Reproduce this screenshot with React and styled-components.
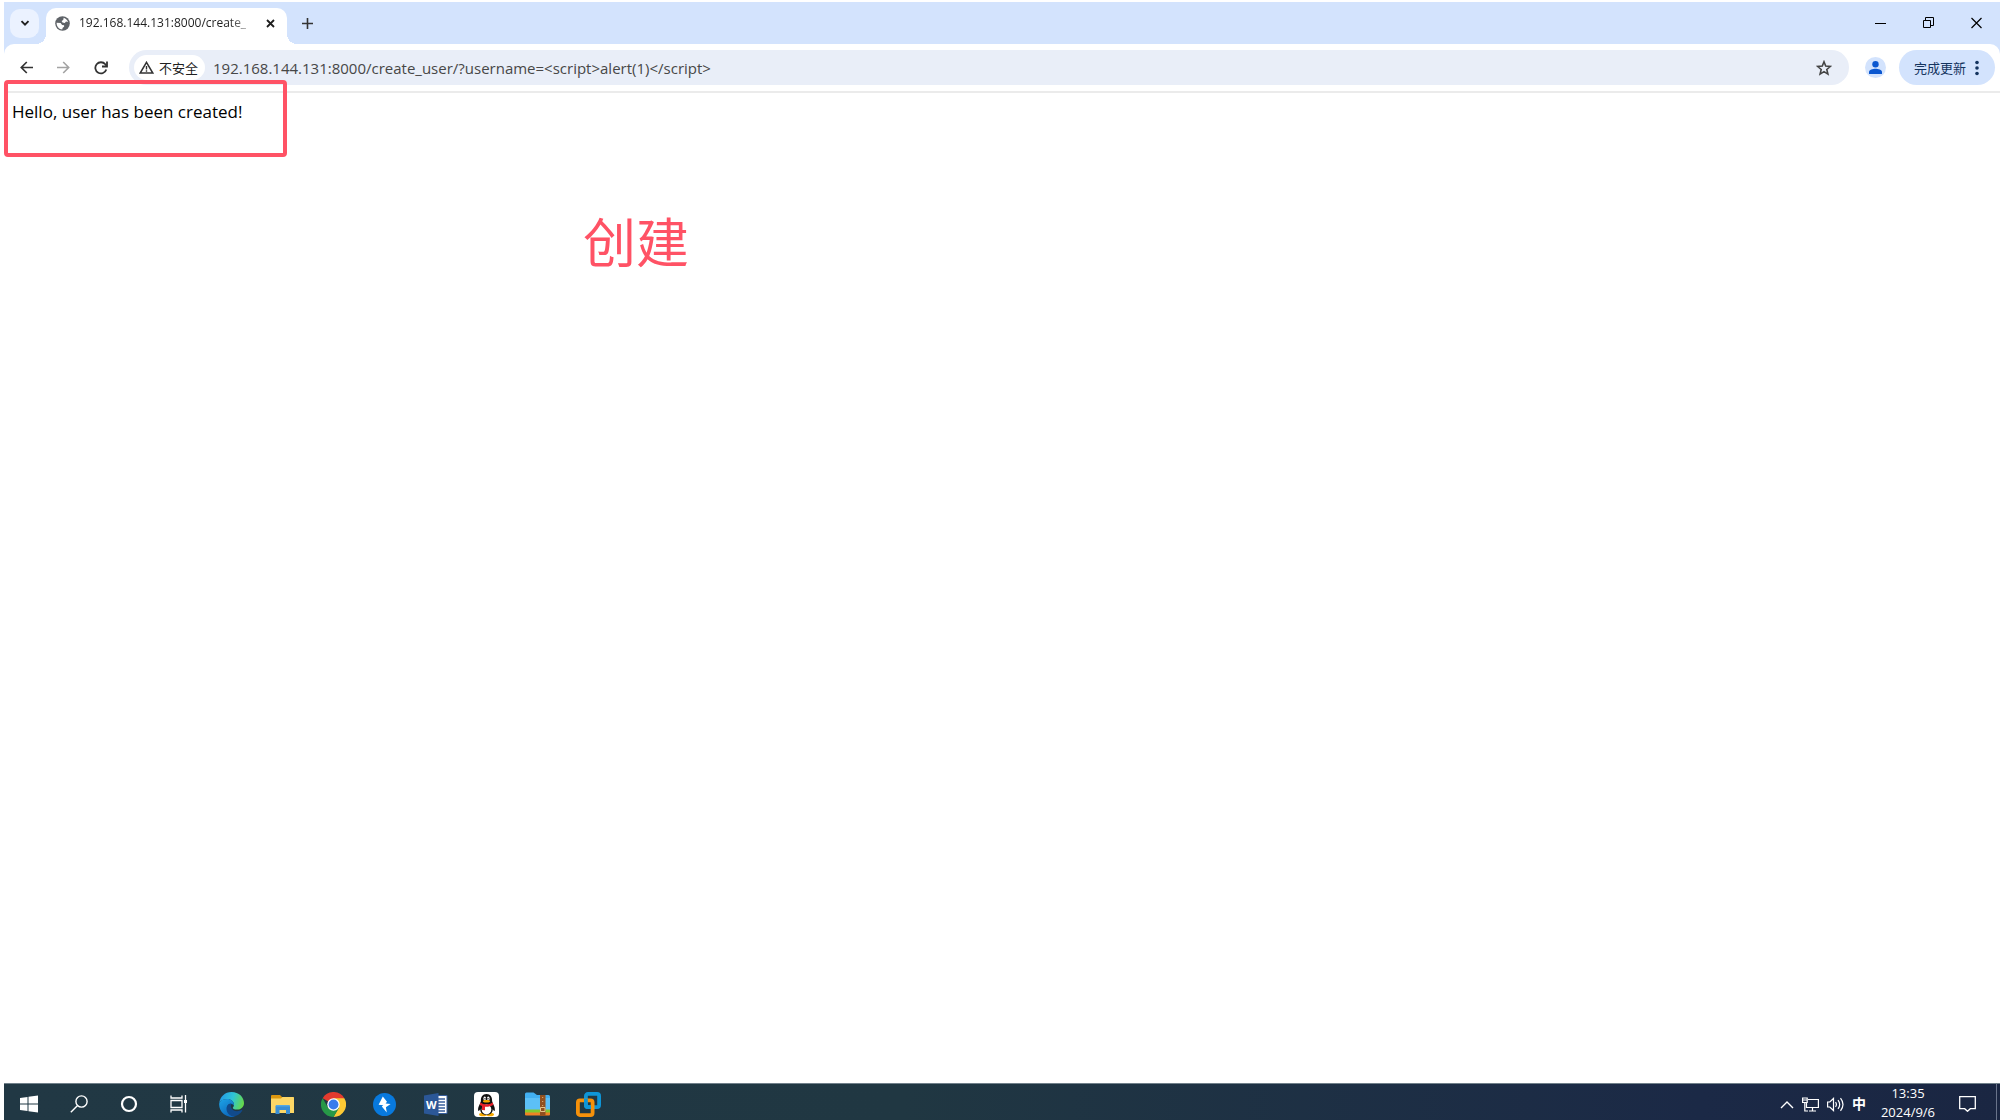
import React from "react";
import styled, { createGlobalStyle } from "styled-components";

const uiFont = '"Open Sans", "Noto Sans", "Noto Sans CJK SC", sans-serif';
const red = "#ff5265";
const frame = "#d3e3fd";

const GlobalStyle = createGlobalStyle`
  * { box-sizing: border-box; }
  body { margin: 0; background: #fff; font-family: ${uiFont}; color: #1f1f1f; }
  button, input { font: inherit; color: inherit; border: 0; padding: 0; margin: 0; background: none; }
`;

const Screen = styled.div`
  display: flex;
  flex-direction: column;
  height: 100vh;
  padding: 2px 0 0 4px;
  overflow: hidden;
`;

const TabStrip = styled.header`
  display: flex;
  align-items: center;
  height: 42px;
  padding-left: 6px;
  background: ${frame};
`;

const TabSearch = styled.button`
  display: grid;
  place-items: center;
  width: 29px;
  height: 29px;
  border-radius: 10px;
  background: #ebf2ff;
`;

const Tab = styled.div`
  display: flex;
  align-items: center;
  align-self: flex-end;
  position: relative;
  width: 241px;
  height: 36px;
  margin-left: 7px;
  padding: 0 10px 6px 9px;
  border-radius: 10px 10px 0 0;
  background: #fff;
  &::before,
  &::after {
    content: "";
    position: absolute;
    bottom: 0;
    width: 10px;
    height: 10px;
  }
  &::before {
    left: -10px;
    background: radial-gradient(circle at 0 0, ${frame} 10px, #fff 10px);
  }
  &::after {
    right: -10px;
    background: radial-gradient(circle at 100% 0, ${frame} 10px, #fff 10px);
  }
`;

const TabTitle = styled.span`
  flex: 1;
  margin-left: 9px;
  font-size: 12px;
  line-height: 18px;
  white-space: nowrap;
  mask-image: linear-gradient(to right, #000 150px, transparent 180px);
`;

const IconButton = styled.button`
  display: grid;
  place-items: center;
  width: ${(p) => p.$w || 37}px;
  height: ${(p) => p.$h || 35}px;
`;

const WindowControls = styled.div`
  display: flex;
  margin-left: auto;
`;

const ToolbarFrame = styled.div`
  background: ${frame};
`;

const Toolbar = styled.nav`
  display: flex;
  align-items: center;
  height: 49px;
  padding: 0 5px 0 4px;
  border-bottom: 2px solid #ebebeb;
  border-radius: 10px 10px 0 0;
  background: #fff;
`;

const AddressBar = styled.form`
  display: flex;
  align-items: center;
  flex: 1;
  height: 35px;
  margin-left: 10px;
  padding: 0 7px 0 5px;
  border-radius: 18px;
  background: #e9eef8;
`;

const SecurityChip = styled.button`
  display: flex;
  align-items: center;
  gap: 5px;
  width: 71px;
  height: 25px;
  padding-left: 5px;
  border-radius: 13px;
  background: #fff;
  font-size: 13px;
  line-height: 18px;
  white-space: nowrap;
`;

const UrlInput = styled.input`
  flex: 1;
  min-width: 0;
  height: 24px;
  margin-left: 8px;
  font-size: 15px;
  line-height: 24px;
  color: #474747;
  outline: none;
`;

const Profile = styled.button`
  display: grid;
  place-items: center;
  width: 21px;
  height: 21px;
  margin: 0 13px 0 16px;
  border-radius: 50%;
  background: ${frame};
`;

const UpdateButton = styled.button`
  display: flex;
  align-items: center;
  justify-content: space-between;
  width: 96px;
  height: 35px;
  padding: 0 16px 0 15px;
  border-radius: 18px;
  background: ${frame};
  font-size: 13px;
  color: #14345f;
`;

const Page = styled.main`
  position: relative;
  flex: 1;
  padding: 7px 8px;
`;

const Message = styled.p`
  margin: 0;
  font-size: 17px;
  line-height: 24px;
  color: #000;
`;

const HighlightBox = styled.div`
  position: absolute;
  top: -13px;
  left: 0;
  width: 283px;
  height: 77px;
  border: 4px solid ${red};
  border-radius: 4px;
`;

const Annotation = styled.div`
  position: absolute;
  top: 118px;
  left: 579px;
  font-size: 53px;
  line-height: 64px;
  color: ${red};
`;

const Taskbar = styled.footer`
  display: flex;
  flex: none;
  align-items: center;
  height: 37px;
  padding-top: 4px;
  border-top: 1px solid #70808a;
  background: linear-gradient(to right, #213844, #203742 45%, #1b2946 85%, #1a2642);
  color: #fff;
`;

const Apps = styled.div`
  display: flex;
  margin-left: 2px;
`;

const Tray = styled.div`
  display: flex;
  align-items: center;
  gap: 8px;
  margin-left: auto;
`;

const InputMode = styled.button`
  font-size: 14px;
  line-height: 20px;
  font-weight: 700;
`;

const Clock = styled.time`
  display: block;
  align-self: flex-start;
  width: 68px;
  height: 32px;
  margin-top: -4px;
  font-size: 13px;
  line-height: 19px;
  text-align: center;
`;

const Notifications = styled.button`
  display: grid;
  place-items: center;
  width: 34px;
  height: 32px;
`;

const ShowDesktop = styled.button`
  width: 4px;
  height: 36px;
  margin: -4px 0 0 4px;
  border-left: 1px solid #69738a;
`;

const Svg = ({ w = 20, h = w, box, children, ...rest }) => (
  <svg width={w} height={h} viewBox={box || `0 0 ${w} ${h}`} fill="none" aria-hidden="true" {...rest}>
    {children}
  </svg>
);

const WindowsIcon = () => (
  <Svg w={18}>
    <path d="M0 3 7.5 1.9V8.5H0zM8.5 1.7 18 .4V8.5H8.5zM0 9.5h7.5v6.6L0 15zM8.5 9.5H18v8.1L8.5 16.3z" fill="#fff" />
  </Svg>
);

const SearchIcon = () => (
  <Svg w={18} stroke="#fff" strokeWidth="1.4">
    <circle cx="11.5" cy="6.5" r="5.6" />
    <path d="M7.6 10.5.8 17.2" />
  </Svg>
);

const CortanaIcon = () => (
  <Svg w={18} stroke="#fff" strokeWidth="2.2">
    <circle cx="9" cy="9" r="7" />
  </Svg>
);

const TaskViewIcon = () => (
  <Svg w={18} stroke="#fff" strokeWidth="1.3">
    <path d="M1 .5V3h11V.5M1 17.5V15h11v2.5M1 5.5h11v7H1zM15.5 0v5M15.5 8v9.5" />
    <path d="M14 5h3v3h-3z" fill="#fff" stroke="none" />
  </Svg>
);

const EdgeIcon = () => (
  <Svg w={25}>
    <defs>
      <linearGradient id="edgeTop" x1="2" y1="5" x2="24" y2="12" gradientUnits="userSpaceOnUse">
        <stop stopColor="#249de4" />
        <stop offset=".5" stopColor="#2fc5d6" />
        <stop offset="1" stopColor="#66d84a" />
      </linearGradient>
      <linearGradient id="edgeSide" x1="3" y1="8" x2="14" y2="24" gradientUnits="userSpaceOnUse">
        <stop stopColor="#1b9de2" />
        <stop offset="1" stopColor="#0b62b8" />
      </linearGradient>
    </defs>
    <path d="M.2 11.5C1 4.5 6 0 12.5 0 20 0 25 5.3 25 11c0 4-3 6.6-6.8 6.6-3.2 0-4.7-1-4.4-1.8.3-.6 1.200-1.3 1.200-3.3 0-3-3-5.5-6.700-5.500-4 0-7.100 1.700-8.100 4.500z" fill="url(#edgeTop)" />
    <path d="M.2 11.500C1.200 8.400 4.300 7 8.300 7c3.700 0 6.700 2.500 6.700 5.500 0 .4 0 .8-.1 1.100C13.800 12 12 11.200 10.300 12c-3 1.400-3.200 6.800.4 10 2 1.800 4.500 2.400 6 2.300A12.500 12.500 0 0 1 .2 11.500z" fill="url(#edgeSide)" />
    <path d="M10.300 12C6 14 7 20.500 10.700 23c4 2.600 9.600.8 12.500-4.300.2-.4-.1-.8-.5-.6-5 2.300-9.400.7-10.600-2.600-.6-1.700 0-3 .6-3.800-.8-.1-1.600 0-2.400.3z" fill="#114a8b" />
  </Svg>
);

const FolderIcon = () => (
  <Svg w={23} h={19}>
    <path d="M0 1q0-1 1-1h8l2 2H22q1 0 1 1v4H0z" fill="#dc970f" />
    <path d="M0 3.5h10l1.5-1.5H22q1 0 1 1v15H0z" fill="#fcd766" />
    <path d="M4.5 11.5q0-1.5 1.5-1.5h11.5q1.5 0 1.5 1.5V19h-4v-4H8.5v4h-4z" fill="#398ed5" />
    <path d="M4.5 11.5q0-1.5 1.5-1.5h11.5q1.5 0 1.5 1.5z" fill="#53a8e4" />
  </Svg>
);

const ChromeIcon = () => (
  <Svg w={25} box="0 0 48 48">
    <path d="M24 24 3.2 12A24 24 0 0 1 44.8 12z" fill="#e33b2e" />
    <path d="M24 12h20.8A24 24 0 0 1 24 48l10.4-18z" fill="#fcc934" />
    <path d="M13.6 30 3.2 12A24 24 0 0 0 24 48l10.4-18z" fill="#279847" />
    <circle cx="24" cy="24" r="12" fill="#fff" />
    <circle cx="24" cy="24" r="9.5" fill="#397ced" />
  </Svg>
);

const BoltIcon = () => (
  <Svg w={23}>
    <circle cx="11.5" cy="11.5" r="11.5" fill="#0879dd" />
    <path d="M9.8 3.600 5.600 11.800 10.300 12.200 8.800 13.600 13.800 19.400 12.900 14.200 17.600 11.100 12.600 10.500 14 8.800z" fill="#fff" />
  </Svg>
);

const WordIcon = () => (
  <Svg w={24} h={23}>
    <path d="M12 2.5h11v18H12z" fill="#fff" stroke="#385f9d" />
    <path d="M14 6h7M14 9h7M14 12h7M14 15h7M14 18h7" stroke="#385f9d" strokeWidth="1.3" />
    <path d="M0 2.5 14.5 0v23L0 20.5z" fill="#2b5797" />
    <text x="7.2" y="15.5" fill="#fff" fontFamily="Open Sans, sans-serif" fontSize="11" fontWeight="700" textAnchor="middle">W</text>
  </Svg>
);

const PenguinIcon = () => (
  <Svg w={25}>
    <rect width="25" height="25" rx="4" fill="#fff" />
    <ellipse cx="9" cy="22.5" rx="4" ry="1.8" fill="#f7a900" />
    <ellipse cx="16" cy="22.5" rx="4" ry="1.8" fill="#f7a900" />
    <path d="M12.5 2C8.5 2 6.8 5 6.9 8.7 6.8 11 3.5 15 4.2 18.5c.4 1.2 1.6-.5 2-1.2 0 3.7 3 5.7 6.300 5.700s6.300-2 6.300-5.700c.4.700 1.600 2.400 2 1.200.7-3.500-2.600-7.500-2.700-9.800C18.200 5 16.500 2 12.500 2z" fill="#111" />
    <ellipse cx="12.5" cy="17.5" rx="4.8" ry="4.9" fill="#fff" />
    <ellipse cx="10.7" cy="6.5" rx="1.3" ry="1.9" fill="#fff" />
    <ellipse cx="14.3" cy="6.5" rx="1.3" ry="1.9" fill="#fff" />
    <circle cx="11" cy="6.7" r=".7" fill="#111" />
    <circle cx="14" cy="6.7" r=".7" fill="#111" />
    <ellipse cx="12.5" cy="9.3" rx="3.6" ry="1.2" fill="#f7a900" />
    <path d="M6.3 10.5c3.500 2.500 9 2.500 12.400 0l.7 2.300c-2.400 1.600-5.500 2.200-8.400 2v3.500l-3-.3v-3.900l-2.200-1z" fill="#e6202a" />
  </Svg>
);

const ArchiveIcon = () => (
  <Svg w={25} h={24}>
    <path d="M0 2q0-1.500 1.500-1.500h7L12 3h11.5Q25 3 25 4.5V18H0z" fill="#42b0f2" />
    <path d="M0 6h25v12H0z" fill="#5cc0f7" />
    <path d="M0 17.5h25V21H0z" fill="#82c930" />
    <path d="M0 20.5h25v2q0 1-1 1H1q-1 0-1-1z" fill="#ef8324" />
    <path d="M15 3h5.500v21H15z" fill="#91501f" />
    <path d="M17.700 5v9" stroke="#e5b97b" strokeDasharray="1 3" />
    <path d="M15.500 15.500h4.500v4h-4.500z" stroke="#e5c48a" />
  </Svg>
);

const VmwareIcon = () => (
  <Svg w={25} strokeWidth="3.8">
    <rect x="9.9" y="1.9" width="13.2" height="13.2" rx="2" stroke="#0e96d8" />
    <rect x="1.9" y="8.4" width="14.7" height="14.7" rx="2" stroke="#f6910a" />
    <path d="M9.9 6.500v6.600q0 2 2 2H15" stroke="#0e96d8" />
  </Svg>
);

const systemApps = [
  ["开始", WindowsIcon],
  ["搜索", SearchIcon],
  ["Cortana", CortanaIcon],
  ["任务视图", TaskViewIcon],
];

const pinnedApps = [
  ["Edge", EdgeIcon],
  ["文件资源管理器", FolderIcon],
  ["Chrome", ChromeIcon],
  ["闪电", BoltIcon],
  ["Word", WordIcon],
  ["QQ", PenguinIcon],
  ["压缩", ArchiveIcon],
  ["VMware", VmwareIcon],
];

function BrowserTabs() {
  return (
    <TabStrip>
      <TabSearch aria-label="搜索标签页">
        <Svg w={10} stroke="#1f1f1f" strokeWidth="1.9"><path d="m1.5 3.2 3.5 3.5 3.5-3.5" /></Svg>
      </TabSearch>
      <Tab>
        <Svg w={15}>
          <circle cx="7.5" cy="7.5" r="7.3" fill="#5f6368" />
          <path d="M8.7 1.7c1 .3 3.500 1.600 4.400 4.300L11 5.500 9.800 7 7.500 6.600l-.9-1.700 1.600-.8zM1.600 6.700l4 .3 1.500 2 2 .3v1.500l-1.400 1-.5 1.700C4 13.300 1.600 10.500 1.600 6.700z" fill="#fff" />
        </Svg>
        <TabTitle>192.168.144.131:8000/create_</TabTitle>
        <IconButton $w={14} $h={18} aria-label="关闭标签页">
          <Svg w={9} stroke="#1f1f1f" strokeWidth="1.8"><path d="m1 1 7 7M8 1 1 8" /></Svg>
        </IconButton>
      </Tab>
      <IconButton $w={40} aria-label="新标签页">
        <Svg w={11} stroke="#333" strokeWidth="1.6"><path d="M5.5 0v11M0 5.5h11" /></Svg>
      </IconButton>
      <WindowControls>
        <IconButton $w={48} aria-label="最小化">
          <Svg w={12} stroke="#000"><path d="M1 6.5h11" /></Svg>
        </IconButton>
        <IconButton $w={48} aria-label="还原">
          <Svg w={12} stroke="#000"><path d="M1.5 3.5h7v7h-7zM3.500 3V.5h8v8H9" /></Svg>
        </IconButton>
        <IconButton $w={48} aria-label="关闭">
          <Svg w={12} stroke="#000" strokeWidth="1.2"><path d="m1.500 1 10 10M11.500 1l-10 10" /></Svg>
        </IconButton>
      </WindowControls>
    </TabStrip>
  );
}

function BrowserToolbar() {
  return (
    <ToolbarFrame>
      <Toolbar>
        <IconButton aria-label="后退">
          <Svg w={13} stroke="#333" strokeWidth="1.7"><path d="M13 6.5H1.5M6.8 1 1.3 6.5 6.8 12" /></Svg>
        </IconButton>
        <IconButton aria-label="前进">
          <Svg w={13} stroke="#a3a3a3" strokeWidth="1.6"><path d="M0 6.5h11.5M6.2 1l5.500 5.500L6.200 12" /></Svg>
        </IconButton>
        <IconButton aria-label="重新加载">
          <Svg w={14} stroke="#333" strokeWidth="1.8">
            <path d="M12.3 8.5a5.600 5.600 0 1 1-1-5.200l1.200 1.500" />
            <path d="M13 .5v5H8" />
          </Svg>
        </IconButton>
        <AddressBar onSubmit={(e) => e.preventDefault()}>
          <SecurityChip type="button">
            <Svg w={15} h={13}>
              <path d="M7.5 1.3 13.8 12H1.2z" stroke="#333" strokeWidth="1.5" />
              <path d="M7.5 5v3.500M7.500 9.300v1.400" stroke="#333" strokeWidth="1.4" />
            </Svg>
            不安全
          </SecurityChip>
          <UrlInput
            aria-label="地址和搜索栏"
            spellCheck={false}
            defaultValue="192.168.144.131:8000/create_user/?username=<script>alert(1)</script>"
          />
          <IconButton type="button" aria-label="收藏">
            <Svg w={16} stroke="#444" strokeWidth="1.6">
              <path d="m8 1.8 1.700 4.300 4.600.4-3.500 3 1.100 4.600L8 11.600l-3.900 2.500 1.100-4.600-3.500-3 4.600-.4z" />
            </Svg>
          </IconButton>
        </AddressBar>
        <Profile aria-label="个人资料">
          <Svg w={13}>
            <circle cx="6.5" cy="3.3" r="3.2" fill="#0b57d0" />
            <path d="M0 13v-2c0-2.300 4-3.300 6.500-3.300S13 8.700 13 11v2z" fill="#0b57d0" />
          </Svg>
        </Profile>
        <UpdateButton>
          完成更新
          <Svg w={4} h={16}>
            <circle cx="2" cy="2.5" r="1.8" fill="#14345f" />
            <circle cx="2" cy="8" r="1.8" fill="#14345f" />
            <circle cx="2" cy="13.5" r="1.8" fill="#14345f" />
          </Svg>
        </UpdateButton>
      </Toolbar>
    </ToolbarFrame>
  );
}

function SystemTaskbar() {
  return (
    <Taskbar>
      {systemApps.map(([name, Icon]) => (
        <IconButton key={name} $w={50} $h={32} aria-label={name}><Icon /></IconButton>
      ))}
      <Apps>
        {pinnedApps.map(([name, Icon]) => (
          <IconButton key={name} $w={51} $h={32} aria-label={name}><Icon /></IconButton>
        ))}
      </Apps>
      <Tray>
        <IconButton $w={14} $h={32} aria-label="显示隐藏的图标">
          <Svg w={14} h={9} stroke="#fff" strokeWidth="1.4"><path d="m1 8 6-6 6 6" /></Svg>
        </IconButton>
        <IconButton $w={17} $h={32} aria-label="网络">
          <Svg w={17} h={15} stroke="#fff" strokeWidth="1.2">
            <path d="M6 2.500h10.400v8H4.500V6M10.500 10.500v3.500M7 14h7M2.800 5.500V14H6M.6 1v4.500h4.600V1zM.6 3h4.600" />
          </Svg>
        </IconButton>
        <IconButton $w={17} $h={32} aria-label="音量">
          <Svg w={17} h={15} stroke="#fff" strokeWidth="1.2">
            <path d="M.6 5v5h2.200L6.500 13.500v-12L2.800 5zM8.500 5.200q1.800 2.300 0 4.600M11 3.200q3.400 4.300 0 8.600M13.500 1.200q5 6.300 0 12.600" />
          </Svg>
        </IconButton>
        <InputMode>中</InputMode>
        <Clock dateTime="2024-09-06T13:35">
          13:35
          <br />
          2024/9/6
        </Clock>
        <Notifications aria-label="通知">
          <Svg w={17} h={16} stroke="#fff" strokeWidth="1.3">
            <path d="M.7.7h15.600v12h-5L8.500 15.300l-2.800-2.600h-5z" />
          </Svg>
        </Notifications>
        <ShowDesktop aria-label="显示桌面" />
      </Tray>
    </Taskbar>
  );
}

export default function App() {
  return (
    <>
      <GlobalStyle />
      <Screen>
        <BrowserTabs />
        <BrowserToolbar />
        <Page>
          <Message>Hello, user has been created!</Message>
          <HighlightBox />
          <Annotation>创建</Annotation>
        </Page>
        <SystemTaskbar />
      </Screen>
    </>
  );
}
